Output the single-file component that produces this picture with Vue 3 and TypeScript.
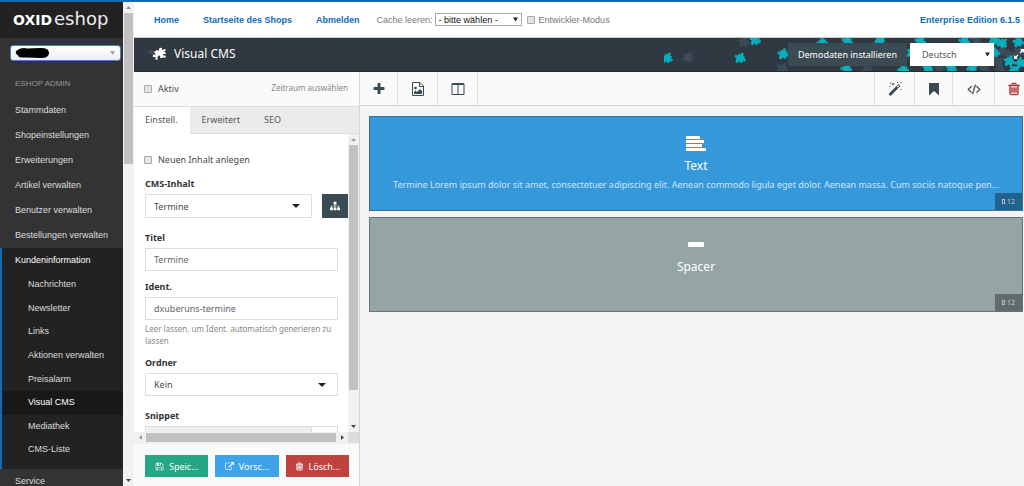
<script setup lang="ts">
import { ref } from 'vue'

const fa = {
  plus: 'M1600 736v192q0 40-28 68t-68 28h-416v416q0 40-28 68t-68 28h-192q-40 0-68-28t-28-68v-416h-416q-40 0-68-28t-28-68v-192q0-40 28-68t68-28h416v-416q0-40 28-68t68-28h192q40 0 68 28t28 68v416h416q40 0 68 28t28 68z',
  columns: 'M224 1536h608v-1152h-640v1120q0 13 9.500 22.500t22.500 9.500zm1376-32v-1120h-640v1152h608q13 0 22.500-9.500t9.500-22.500zm128-1216v1216q0 66-47 113t-113 47h-1344q-66 0-113-47t-47-113v-1216q0-66 47-113t113-47h1344q66 0 113 47t47 113z',
  bookmark: 'M256 128h1280v1600l-640-580-640 580z',
  trash: 'M704 736v576q0 14-9 23t-23 9h-64q-14 0-23-9t-9-23v-576q0-14 9-23t23-9h64q14 0 23 9t9 23zm256 0v576q0 14-9 23t-23 9h-64q-14 0-23-9t-9-23v-576q0-14 9-23t23-9h64q14 0 23 9t9 23zm256 0v576q0 14-9 23t-23 9h-64q-14 0-23-9t-9-23v-576q0-14 9-23t23-9h64q14 0 23 9t9 23zm128 724v-948h-896v948q0 22 7 40.500t14.500 27 10.500 8.500h832q3 0 10.500-8.500t14.500-27 7-40.500zm-672-1076h448l-48-117q-7-9-17-11h-317q-10 2-17 11zm928 32v64q0 14-9 23t-23 9h-96v948q0 83-47 143.500t-113 60.500h-832q-66 0-113-58.500t-47-141.500v-952h-96q-14 0-23-9t-9-23v-64q0-14 9-23t23-9h309l70-167q15-37 54-63t79-26h320q40 0 79 26t54 63l70 167h309q14 0 23 9t9 23z',
  code: 'M681 1399l-50 50q-10 10-23 10t-23-10l-466-466q-10-10-10-23t10-23l466-466q10-10 23-10t23 10l50 50q10 10 10 23t-10 23l-393 393 393 393q10 10 10 23t-10 23zm591-1067l-373 1291q-4 13-15.500 19.500t-23.500 2.500l-62-17q-13-4-19.500-15.500t-2.500-24.500l373-1291q4-13 15.500-19.500t23.500-2.500l62 17q13 4 19.500 15.500t2.500 24.500zm657 651l-466 466q-10 10-23 10t-23-10l-50-50q-10-10-10-23t10-23l393-393-393-393q-10-10-10-23t10-23l50-50q10-10 23-10t23 10l466 466q10 10 10 23t-10 23z',
  sitemap: 'M1792 1248v320q0 40-28 68t-68 28h-320q-40 0-68-28t-28-68v-320q0-40 28-68t68-28h96v-192h-512v192h96q40 0 68 28t28 68v320q0 40-28 68t-68 28h-320q-40 0-68-28t-28-68v-320q0-40 28-68t68-28h96v-192h-512v192h96q40 0 68 28t28 68v320q0 40-28 68t-68 28h-320q-40 0-68-28t-28-68v-320q0-40 28-68t68-28h96v-192q0-52 38-90t90-38h512v-192h-96q-40 0-68-28t-28-68v-320q0-40 28-68t68-28h320q40 0 68 28t28 68v320q0 40-28 68t-68 28h-96v192h512q52 0 90 38t38 90v192h96q40 0 68 28t28 68z',
  save: 'M512 1536h768v-384h-768v384zm896 0h128v-896q0-14-10-38.500t-20-34.500l-281-281q-10-10-34-20t-39-10v416q0 40-28 68t-68 28h-576q-40 0-68-28t-28-68v-416h-128v1280h128v-416q0-40 28-68t68-28h832q40 0 68 28t28 68v416zm-384-928v-320q0-13-9.500-22.500t-22.500-9.500h-192q-13 0-22.500 9.500t-9.500 22.500v320q0 13 9.500 22.500t22.500 9.500h192q13 0 22.500-9.500t9.500-22.500zm640 32v928q0 40-28 68t-68 28h-1344q-40 0-68-28t-28-68v-1344q0-40 28-68t68-28h928q40 0 88 20t76 48l280 280q28 28 48 76t20 88z',
  external: 'M1408 928v320q0 119-84.500 203.500t-203.500 84.500h-832q-119 0-203.500-84.500t-84.500-203.500v-832q0-119 84.500-203.500t203.500-84.500h704q14 0 23 9t9 23v64q0 14-9 23t-23 9h-704q-66 0-113 47t-47 113v832q0 66 47 113t113 47h832q66 0 113-47t47-113v-320q0-14 9-23t23-9h64q14 0 23 9t9 23zm384-864v512q0 26-19 45t-45 19-45-19l-176-176-652 652q-10 10-23 10t-23-10l-114-114q-10-10-10-23t10-23l652-652-176-176q-19-19-19-45t19-45 45-19h512q26 0 45 19t19 45z',
}

const mainItems = ['Stammdaten', 'Shopeinstellungen', 'Erweiterungen', 'Artikel verwalten', 'Benutzer verwalten', 'Bestellungen verwalten']
const subItems = ['Nachrichten', 'Newsletter', 'Links', 'Aktionen verwalten', 'Preisalarm', 'Visual CMS', 'Mediathek', 'CMS-Liste']
const topLinks = ['Home', 'Startseite des Shops', 'Abmelden']
const tabs = ['Einstell.', 'Erweitert', 'SEO']
const activeSub = ref('Visual CMS')
const activeTab = ref('Einstell.')
const titel = ref('Termine')
const ident = ref('dxuberuns-termine')

interface Piece { x: number; y: number; r: number; dim?: boolean }
const pieces: Piece[] = [
  { x: 24, y: 19, r: 40, dim: true }, { x: 80, y: 4, r: 20, dim: true }, { x: 118, y: 30, r: 30, dim: true },
  { x: 203, y: 32, r: 60, dim: true }, { x: 275, y: 30, r: 10, dim: true }, { x: 312, y: 3, r: 30, dim: true },
  { x: 338, y: 13, r: 10, dim: true }, { x: 346, y: 17, r: 70, dim: true }, { x: 334, y: 24, r: 45, dim: true },
  { x: 355, y: 14, r: 35, dim: true }, { x: 320, y: 31, r: 20, dim: true }, { x: 336, y: 32, r: 15, dim: true },
  { x: 3, y: 20, r: 25 }, { x: 76, y: 20, r: 25 }, { x: 91, y: 2, r: 20 }, { x: 119, y: 16, r: 15 },
  { x: 158, y: 5, r: 0 }, { x: 183, y: 3, r: 20 }, { x: 216, y: 2, r: 50 }, { x: 182, y: 31, r: 10 },
  { x: 239, y: 32, r: 5 }, { x: 264, y: 31, r: 30 }, { x: 287, y: 30, r: 20 }, { x: 248, y: 15, r: 40 },
  { x: 256, y: 3, r: 15 }, { x: 300, y: 3, r: 10 }, { x: 308, y: 30, r: 60 }, { x: 330, y: 2, r: 40 },
  { x: 338, y: 5, r: 45 }, { x: 354, y: 4, r: 10 }, { x: 330, y: 15, r: 5 }, { x: 345, y: 23, r: 20 },
  { x: 356, y: 25, r: 0 }, { x: 350, y: 32, r: 50 },
]
</script>

<template>
  <div class="app">
    <svg class="defs" aria-hidden="true">
      <symbol id="piece" viewBox="-6 -6 12 12">
        <path d="M-3-3.500h2q.4 0 .1-.6a1.500 1.400 0 1 1 2.600 0q-.3.6.3.6H4v2q0 .5.500.200a1.400 1.500 0 1 1 0 2.600q-.5-.3-.5.3V4H1.800q-.8-1.400-1.600 0 .3 1.900-1.600 1.800-1.700-.3-1.200-1.800H-3V1.700q0-.6-.6-.3a1.400 1.500 0 1 1 0-2.600q.6.3.6-.3z" />
      </symbol>
    </svg>

    <aside class="sidebar">
      <div class="logo"><span class="logo-a">OXID</span><span class="logo-b">eshop</span></div>
      <div class="shop">
        <select aria-label="Shop"><option></option></select>
        <svg class="scribble" viewBox="0 0 36 12" aria-hidden="true"><path d="M1 4Q6 0 12 1.500L26 1q8 0 8 5t-8 5l-14-.5Q2 11 3 8 0 7 1 4z" /></svg>
        <svg class="shop-arrow" viewBox="0 0 6 4" aria-hidden="true"><path d="M0 0h6L3 4z" /></svg>
      </div>
      <nav class="menu" aria-label="Administration">
        <h2>ESHOP ADMIN</h2>
        <a v-for="i in mainItems" :key="i" href="#">{{ i }}</a>
        <div class="group">
          <a href="#" class="open">Kundeninformation</a>
          <div class="subs">
            <a v-for="s in subItems" :key="s" href="#" :class="{ active: s === activeSub }" @click.prevent="activeSub = s">{{ s }}</a>
          </div>
        </div>
        <a href="#">Service</a>
      </nav>
    </aside>

    <div class="vbar page-bar" aria-hidden="true"><i class="up dim"></i><b></b><i class="down"></i></div>

    <main class="main">
      <header class="top">
        <nav aria-label="Shop"><a v-for="l in topLinks" :key="l" href="#">{{ l }}</a></nav>
        <label class="cache-label" for="cache">Cache leeren:</label>
        <div class="pick cache">
          <select id="cache"><option>- bitte wählen -</option></select>
          <svg viewBox="0 0 6 5" aria-hidden="true"><path d="M0 0h6L3 5z" /></svg>
        </div>
        <label class="dev"><input type="checkbox" /><span>Entwickler-Modus</span></label>
        <strong>Enterprise Edition 6.1.5</strong>
      </header>

      <div class="title">
        <svg class="pieces" viewBox="0 0 360 33" aria-hidden="true">
          <g v-for="(p, n) in pieces" :key="n" :transform="`translate(${p.x} ${p.y}) rotate(${p.r})`" :fill="p.dim ? '#3b4b58' : '#08aebb'">
            <use href="#piece" x="-6" y="-6" width="12" height="12" />
          </g>
        </svg>
        <svg class="mark" viewBox="0 0 20 14" aria-hidden="true">
          <path d="M0 4l6 .5M2 6l4 .5" stroke="#59636b" />
          <path fill="#fff" d="M6 5l3-2 2 1 0-2q1-2 3-1l0 2 3-1 1 1-2 2q2 0 2 2l-3 0 0 1 3 1-1 2-2-1 0 1-3 0q1-3-1-2.500T9.500 13L7 12l1-2-3 0q-1-2 1-2.500l2 0z" />
        </svg>
        <h1>Visual CMS</h1>
        <button class="demo" type="button">Demodaten installieren</button>
        <div class="pick lang">
          <select aria-label="Sprache"><option>Deutsch</option></select>
          <svg viewBox="0 0 6 5" aria-hidden="true"><path d="M0 0h6L3 5z" /></svg>
        </div>
        <button class="expand" type="button" aria-label="Vollbild">
          <svg viewBox="0 0 10 10"><path d="M6 0h4v4L8.500 2.500 6.500 4.500l-1-1 2-2zM0 6l1.500 1.500 2-2 1 1-2 2L4 10H0z" fill="#fff" /></svg>
        </button>
      </div>

      <div class="work">
        <section class="panel">
          <div class="state">
            <label class="check"><input type="checkbox" /><span>Aktiv</span></label>
            <a href="#">Zeitraum auswählen</a>
          </div>
          <div class="tabs" role="tablist">
            <button v-for="t in tabs" :key="t" type="button" role="tab" :aria-selected="t === activeTab" @click="activeTab = t">{{ t }}</button>
          </div>
          <div class="scroll">
            <form class="form" @submit.prevent>
              <label class="check"><input type="checkbox" /><span>Neuen Inhalt anlegen</span></label>
              <label class="name" for="inhalt">CMS-Inhalt</label>
              <div class="row">
                <div class="pick field">
                  <select id="inhalt"><option>Termine</option></select>
                  <svg viewBox="0 0 8 4" aria-hidden="true"><path d="M0 0h8L4 4z" /></svg>
                </div>
                <button type="button" class="tree" aria-label="Baum"><svg viewBox="0 0 1792 1792"><path :d="fa.sitemap" /></svg></button>
              </div>
              <label class="name" for="titel">Titel</label>
              <input id="titel" v-model="titel" class="text" type="text" />
              <label class="name" for="ident">Ident.</label>
              <input id="ident" v-model="ident" class="text" type="text" />
              <p>Leer lassen, um Ident. automatisch generieren zu lassen</p>
              <label class="name" for="ordner">Ordner</label>
              <div class="pick field full">
                <select id="ordner"><option>Kein</option></select>
                <svg viewBox="0 0 8 4" aria-hidden="true"><path d="M0 0h8L4 4z" /></svg>
              </div>
              <label class="name snip" for="snippet">Snippet</label>
              <div class="snippet"><input id="snippet" type="text" readonly /><button type="button" aria-label="Kopieren"><i></i></button></div>
            </form>
            <div class="vbar" aria-hidden="true"><i class="up dim"></i><b></b><i class="down"></i></div>
          </div>
          <div class="hbar" aria-hidden="true"><i class="left"></i><b></b><i class="right"></i><em></em></div>
          <footer>
            <button type="button" class="save"><svg viewBox="0 0 1792 1792"><path :d="fa.save" /></svg>Speic...</button>
            <button type="button" class="view"><svg viewBox="0 0 1792 1792"><path :d="fa.external" /></svg>Vorsc...</button>
            <button type="button" class="del"><svg class="bold" viewBox="0 0 1792 1792"><path :d="fa.trash" /></svg>Lösch...</button>
          </footer>
        </section>

        <section class="editor">
          <div class="tools">
            <button type="button" class="narrow" aria-label="Hinzufügen"><svg viewBox="0 0 1792 1792"><path :d="fa.plus" /></svg></button>
            <button type="button" aria-label="Bild">
              <svg viewBox="0 0 14 14"><path d="M1.500.5h7.500L12.500 4v9.500h-11z" fill="none" stroke="#3a4a53" /><path d="M8.500 1v3.500h4" fill="none" stroke="#3a4a53" /><path d="M3 12v-2l1.500-1.500L6 10l3-3 2 2v3z" /><circle cx="4.500" cy="6" r="1.300" /></svg>
            </button>
            <button type="button" aria-label="Spalten"><svg viewBox="0 0 1792 1792"><path :d="fa.columns" /></svg></button>
            <span class="fill"></span>
            <button type="button" aria-label="Assistent">
              <svg viewBox="0 0 14 14"><path d="M.5 12L10.500 2l2 2-10 10z" /><path d="M8.700 4.800l1.700-1.700.8.8-1.700 1.700z" fill="#fafafa" /><path d="M5 0l.4 1.400L7 2l-1.600.5L5 4l-.5-1.500L3 2l1.500-.6zM2 .5h1v1H2zM1.500 4h1v1h-1zM9 0h1v1H9zM12.500 0h1v1h-1zM12.500 7h1v1h-1z" /></svg>
            </button>
            <button type="button" class="narrow" aria-label="Lesezeichen"><svg viewBox="0 0 1792 1792"><path :d="fa.bookmark" /></svg></button>
            <button type="button" class="wide" aria-label="Quelltext"><svg class="bold" viewBox="0 0 2048 1792"><path :d="fa.code" /></svg></button>
            <button type="button" class="remove" aria-label="Löschen"><svg class="bold" viewBox="0 0 1792 1792"><path :d="fa.trash" /></svg></button>
          </div>
          <div class="canvas">
            <article class="block blue">
              <svg viewBox="0 0 20 16" aria-hidden="true"><path d="M0 0h14v3H0zM0 4h18v3H0zM0 8h16v3H0zM0 12h20v3H0z" /></svg>
              <h3>Text</h3>
              <p>Termine Lorem ipsum dolor sit amet, consectetuer adipiscing elit. Aenean commodo ligula eget dolor. Aenean massa. Cum sociis natoque pen...</p>
              <span class="size"><i></i>12</span>
            </article>
            <article class="block grey">
              <svg viewBox="0 0 20 16" aria-hidden="true"><rect x="2" y="5" width="16" height="5" rx="1" /></svg>
              <h3>Spacer</h3>
              <span class="size"><i></i>12</span>
            </article>
          </div>
        </section>
      </div>
    </main>
  </div>
</template>

<style>
html, body { margin: 0; overflow: hidden; }
</style>

<style scoped>
* { box-sizing: border-box; }
.app { display: flex; height: 100vh; border-top: 2px solid #0d6cb5; overflow: hidden; background: #fff; font-family: "Noto Sans", "Open Sans", sans-serif; font-size: 9px; color: #4a4a4a; }
a { text-decoration: none; color: inherit; }
button, input, select { font: inherit; color: inherit; margin: 0; padding: 0; border: 0; border-radius: 0; background: none; }
select, input { appearance: none; outline: none; }
h1, h2, h3, p { margin: 0; font-weight: 400; }
svg { display: block; fill: currentColor; }
.bold { stroke: currentColor; stroke-width: 60; }
.defs { position: absolute; width: 0; height: 0; }

/* sidebar */
.sidebar { flex: none; width: 123px; background: #333; color: #ddd; font-family: "Liberation Sans", Arial, sans-serif; font-size: 9px; overflow: hidden; }
.logo { display: flex; align-items: baseline; gap: 2px; height: 36px; padding-left: 13px; background: #222; color: #fff; font-family: "DejaVu Sans", sans-serif; line-height: 34px; }
.logo-a { font-size: 14px; font-weight: 700; }
.logo-b { font-size: 18px; color: #eee; }
.shop { position: relative; margin: 7px 2px 0 10px; }
.shop select { display: block; width: 100%; height: 16px; border: 1px solid #4a7fd0; border-radius: 3px; background: linear-gradient(#fff, #eee); }
.scribble { position: absolute; left: 5px; top: 2px; width: 36px; height: 12px; fill: #000; }
.shop-arrow { position: absolute; right: 6px; top: 6px; width: 5px; height: 4px; fill: #999; }
.menu a { display: block; padding-left: 15px; line-height: 25px; white-space: nowrap; }
.menu h2 { padding: 11px 0 2px 15px; font-size: 8px; line-height: 24px; color: #999; }
.group { border-left: 2px solid #0d6cb5; background: #222; padding-bottom: 7px; }
.menu .open { padding-left: 13px; color: #fff; }
.subs { display: grid; grid-auto-rows: 1fr; height: 189px; }
.menu .subs a { padding-left: 26px; line-height: 23px; }
.menu .subs .active { background: #181818; color: #fff; }

/* scrollbars */
.vbar { flex: none; display: flex; flex-direction: column; align-items: center; width: 11px; background: #f1f1f1; }
.vbar b { width: 9px; background: #c1c1c1; }
.vbar i { flex: none; width: 5px; height: 3px; margin: 4px 0; background: #444; clip-path: polygon(0 0, 100% 0, 50% 100%); }
.vbar .up { clip-path: polygon(50% 0, 100% 100%, 0 100%); }
.vbar .dim { background: #999; }
.vbar .down { margin-top: auto; }
.page-bar b { height: 151px; }

/* top bar */
.main { flex: 1; min-width: 0; display: flex; flex-direction: column; }
.top { flex: none; display: flex; align-items: center; height: 36px; padding: 0 4px 0 20px; border-bottom: 1px solid #ccc; font-family: "Liberation Sans", Arial, sans-serif; font-size: 9px; color: #777; white-space: nowrap; }
.top nav { display: flex; gap: 24px; margin-right: 17px; color: #0d6cb5; font-weight: 700; }
.top strong { margin-left: auto; color: #0d6cb5; }
.pick { position: relative; }
.pick select { display: block; width: 100%; height: 100%; }
.pick svg { position: absolute; pointer-events: none; fill: #222; }
.cache { width: 87px; height: 13px; margin: 0 5px 0 2px; color: #111; }
.cache select { border: 1px solid #aaa; padding-left: 3px; }
.cache svg { right: 4px; top: 4px; width: 5px; height: 5px; }
.dev { display: flex; align-items: center; gap: 4px; }
input[type="checkbox"] { flex: none; width: 8px; height: 8px; border: 1px solid #aaa; border-radius: 1px; background: #e4e4e4; }
input[type="checkbox"]:checked { background: #0d6cb5; }

/* title bar */
.title { position: relative; flex: none; display: flex; align-items: center; height: 34px; padding: 0 0 1px 14px; border-bottom: 1px solid #222a31; background: #303841; color: #fff; overflow: hidden; }
.pieces { position: absolute; right: 0; top: 0; width: 360px; height: 33px; }
.mark { width: 20px; height: 14px; fill: none; }
.title h1 { margin-left: 6px; font-size: 12px; line-height: 20px; }
.demo { position: relative; margin-left: auto; height: 23px; padding: 0 10px; background: #3b4b53; color: #fff; white-space: nowrap; }
.lang { width: 84px; height: 23px; margin-left: 3px; background: #fff; color: #555; }
.lang select { padding-left: 12px; }
.lang svg { right: 4px; top: 9px; width: 5px; height: 5px; }
.expand { position: relative; margin-left: 20px; }
.expand svg { width: 10px; height: 10px; }

/* settings panel */
.work { flex: 1; min-height: 0; display: flex; }
.panel { flex: none; display: flex; flex-direction: column; width: 226px; border-right: 1px solid #d5d5d5; background: #fafafa; }
.state { flex: none; display: flex; justify-content: space-between; height: 34px; padding: 0 11px 0 10px; line-height: 34px; }
.state a { font-size: 8px; line-height: 32px; color: #888; }
.check { display: flex; align-items: center; gap: 6px; }
.tabs { flex: none; display: flex; height: 28px; border-top: 1px solid #ddd; background: #ebebeb; }
.tabs button { padding: 0 12px 2px; border-bottom: 1px solid #ddd; color: #555; }
.tabs button[aria-selected="true"] { padding-left: 11px; border-bottom-color: #fff; background: #fff; }
.tabs::after { content: ""; flex: 1; border-bottom: 1px solid #ddd; }
.scroll { flex: 1; min-height: 0; display: flex; background: #fff; }
.scroll .vbar b { height: 245px; }
.form { flex: 1; min-width: 0; padding: 18px 0 0 11px; overflow: hidden; }
.form .check { line-height: 16px; margin-left: -1px; }
.name { display: block; margin-top: 8px; font-weight: 700; line-height: 16px; color: #333; }
.row { display: flex; justify-content: space-between; margin: 2px 0 12px; }
.field { width: 167px; height: 24px; border: 1px solid #ddd; background: #fff; }
.field select { padding-left: 8px; }
.field svg { right: 11px; top: 9px; width: 8px; height: 4px; }
.full, .text { display: block; width: 193px; }
.tree { display: grid; place-items: center; width: 26px; background: #3b4b53; color: #fff; }
.tree svg { width: 10px; height: 10px; }
.text { height: 23px; margin-top: 2px; padding: 0 8px; border: 1px solid #ddd; background: #fff; color: #666; }
.form p { margin-top: 3px; font-size: 8px; line-height: 12px; color: #888; width: 193px; }
.full { height: 23px; margin-top: 2px; }
.snip { margin-top: 12px; }
.snippet { display: flex; width: 193px; height: 23px; margin-top: 2px; border: 1px solid #ddd; }
.snippet input { flex: 1; min-width: 0; background: #eee; }
.snippet button { width: 26px; border-left: 1px solid #ddd; }
.snippet i { display: block; width: 7px; height: 8px; margin: 0 auto; border: 1px solid #888; }
.hbar { flex: none; display: flex; align-items: center; height: 11px; background: #f1f1f1; }
.hbar i { width: 3px; height: 5px; margin: 0 4px 0 5px; background: #444; clip-path: polygon(0 0, 100% 50%, 0 100%); }
.hbar .left { background: #999; clip-path: polygon(100% 0, 100% 100%, 0 50%); }
.hbar b { flex: 1; height: 9px; background: #c1c1c1; }
.hbar em { width: 11px; height: 11px; background: #dcdcdc; }
footer { flex: none; display: flex; gap: 7px; padding: 11px 10px 9px 11px; border-top: 1px solid #eee; }
footer button { flex: 1; display: flex; align-items: center; justify-content: center; gap: 5px; height: 22px; color: #fff; white-space: nowrap; }
footer svg { width: 9px; height: 9px; }
.save { background: #25a785; }
.view { background: #3ea3e8; }
.del { background: #bf423f; }

/* editor */
.editor { flex: 1; min-width: 0; background: #f4f4f4; }
.tools { display: flex; height: 34px; border-bottom: 1px solid #d5d5d5; background: #fafafa; color: #3a4a53; overflow: hidden; }
.tools button { flex: none; display: grid; place-items: center; width: 40px; border-right: 1px solid #ddd; }
.tools .narrow { width: 38px; }
.tools .wide { width: 42px; }
.tools svg { width: 14px; height: 14px; }
.fill { flex: 1; border-right: 1px solid #ddd; }
.tools .remove { width: 29px; padding-left: 9px; border: 0; color: #b03a3a; }
.canvas { display: grid; grid-template-columns: minmax(0, 1fr); gap: 6px; padding: 10px 1px 10px 9px; }
.block { position: relative; display: flex; flex-direction: column; align-items: center; height: 95px; padding: 19px 10px 0; border: 1px solid rgba(60, 70, 75, .5); color: #fff; }
.blue { background: #3498db; }
.grey { background: #95a5a5; }
.block svg { width: 20px; height: 16px; }
.block h3 { margin-top: 5px; font-size: 12px; line-height: 17px; }
.block p { margin-top: 2px; max-width: 100%; line-height: 18px; white-space: nowrap; opacity: .75; }
.size { position: absolute; right: 0; bottom: 0; display: flex; align-items: center; justify-content: center; gap: 2px; width: 27px; height: 17px; background: rgba(0, 0, 0, .35); font-size: 7px; color: #ccc; }
.size i { width: 3px; height: 5px; border: 1px solid #bbb; }
</style>
